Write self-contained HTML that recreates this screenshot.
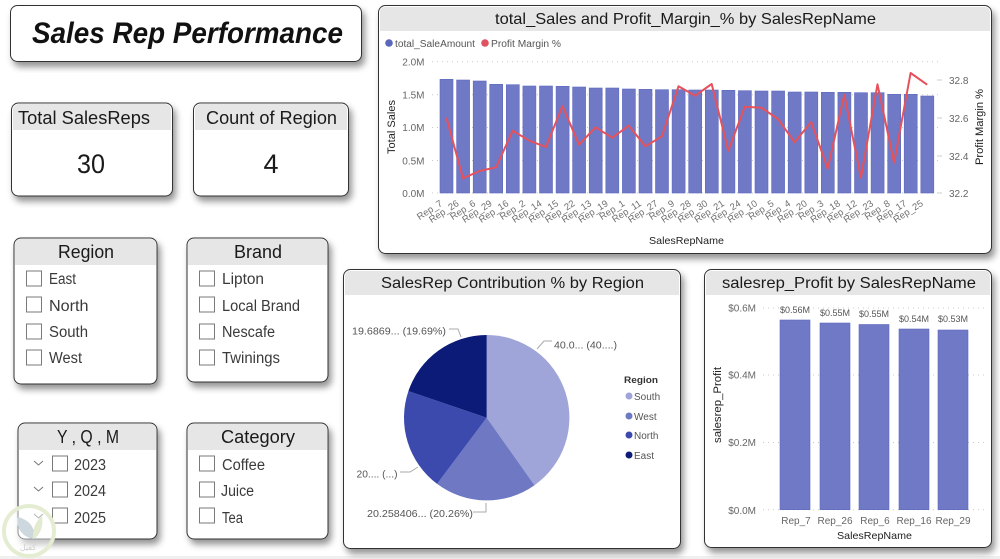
<!DOCTYPE html>
<html><head><meta charset="utf-8"><style>
html,body{margin:0;padding:0;background:#fff;width:1000px;height:559px;overflow:hidden}
svg{display:block}
text{font-family:"Liberation Sans",sans-serif}
.t{fill:#1a1a1a}
.s{fill:#3a3a3a;font-size:15.5px}
.a{fill:#666;font-size:10px}
.r{fill:#707070;font-size:9.5px;text-anchor:end}
.c{fill:#fff;stroke:#333;stroke-width:1;filter:url(#sh)}
.h{fill:#e6e6e6}
.b{fill:none;stroke:#7a7a7a;stroke-width:1}
.g{stroke:#c8c8c8;stroke-width:1;stroke-dasharray:1 4}
.bar rect{fill:#6f79c5;stroke:#5f6abf;stroke-width:.6}
</style></head><body>
<svg width="1000" height="559" viewBox="0 0 1000 559" xmlns="http://www.w3.org/2000/svg">
<defs><filter id="sh" x="-10%" y="-10%" width="125%" height="130%"><feDropShadow dx="3" dy="5" stdDeviation="3.5" flood-color="#000" flood-opacity=".42"/></filter></defs>
<rect x="0" y="556" width="1000" height="3" fill="#f0f0f0"/>

<!-- title -->
<rect class="c" x="10.5" y="5.5" width="351" height="56" rx="7"/>
<text x="32" y="43" font-size="30" font-weight="bold" font-style="italic" fill="#111" textLength="311" lengthAdjust="spacingAndGlyphs">Sales Rep Performance</text>

<!-- KPI cards -->
<rect class="c" x="11.5" y="103" width="161" height="93" rx="7"/>
<path class="h" d="M13 130V110a6 6 0 0 1 6-6H165a6 6 0 0 1 6 6V130Z"/>
<text class="t" x="18" y="124" font-size="18.5" textLength="132" lengthAdjust="spacingAndGlyphs">Total SalesReps</text>
<text class="t" x="91" y="173" font-size="27" text-anchor="middle" textLength="28" lengthAdjust="spacingAndGlyphs">30</text>
<rect class="c" x="193.5" y="103" width="155" height="93" rx="7"/>
<path class="h" d="M195 130V110a6 6 0 0 1 6-6H341a6 6 0 0 1 6 6V130Z"/>
<text class="t" x="206" y="124" font-size="18.5" textLength="131" lengthAdjust="spacingAndGlyphs">Count of Region</text>
<text class="t" x="271" y="173" font-size="27" text-anchor="middle">4</text>

<!-- slicers -->
<rect class="c" x="14" y="238" width="143" height="146" rx="7"/>
<path class="h" d="M15 265V245a6 6 0 0 1 6-6H150a6 6 0 0 1 6 6V265Z"/>
<text class="t" x="58" y="258" font-size="18.5" textLength="56" lengthAdjust="spacingAndGlyphs">Region</text>
<rect class="b" x="26.5" y="271" width="15" height="15"/><text class="s" x="49" y="284" textLength="27" lengthAdjust="spacingAndGlyphs">East</text>
<rect class="b" x="26.5" y="297" width="15" height="15"/><text class="s" x="49" y="311" textLength="39.5" lengthAdjust="spacingAndGlyphs">North</text>
<rect class="b" x="26.5" y="324" width="15" height="15"/><text class="s" x="49" y="337" textLength="39" lengthAdjust="spacingAndGlyphs">South</text>
<rect class="b" x="26.5" y="350" width="15" height="15"/><text class="s" x="49" y="363" textLength="33" lengthAdjust="spacingAndGlyphs">West</text>

<rect class="c" x="187" y="238" width="141" height="144" rx="7"/>
<path class="h" d="M188 265V245a6 6 0 0 1 6-6H321a6 6 0 0 1 6 6V265Z"/>
<text class="t" x="234" y="258" font-size="18.5" textLength="48" lengthAdjust="spacingAndGlyphs">Brand</text>
<rect class="b" x="199.5" y="271" width="15" height="15"/><text class="s" x="222" y="284" textLength="42" lengthAdjust="spacingAndGlyphs">Lipton</text>
<rect class="b" x="199.5" y="297" width="15" height="15"/><text class="s" x="222" y="311" textLength="78" lengthAdjust="spacingAndGlyphs">Local Brand</text>
<rect class="b" x="199.5" y="324" width="15" height="15"/><text class="s" x="222" y="337" textLength="53" lengthAdjust="spacingAndGlyphs">Nescafe</text>
<rect class="b" x="199.5" y="350" width="15" height="15"/><text class="s" x="222" y="363" textLength="58" lengthAdjust="spacingAndGlyphs">Twinings</text>

<rect class="c" x="18" y="423" width="139" height="116" rx="7"/>
<path class="h" d="M19 450V430a6 6 0 0 1 6-6H150a6 6 0 0 1 6 6V450Z"/>
<text class="t" x="57" y="443" font-size="18.5" textLength="62" lengthAdjust="spacingAndGlyphs">Y , Q , M</text>
<path d="M34 461l4.500 4 4.500-4M34 487l4.500 4 4.500-4M34 514l4.500 4 4.500-4" fill="none" stroke="#777" stroke-width="1"/>
<rect class="b" x="52.500" y="456" width="15" height="15"/><text class="s" x="74" y="470" textLength="32" lengthAdjust="spacingAndGlyphs">2023</text>
<rect class="b" x="52.500" y="482" width="15" height="15"/><text class="s" x="74" y="496" textLength="32" lengthAdjust="spacingAndGlyphs">2024</text>
<rect class="b" x="52.500" y="508" width="15" height="15"/><text class="s" x="74" y="523" textLength="32" lengthAdjust="spacingAndGlyphs">2025</text>

<rect class="c" x="187" y="423" width="141" height="116" rx="7"/>
<path class="h" d="M188 450V430a6 6 0 0 1 6-6H321a6 6 0 0 1 6 6V450Z"/>
<text class="t" x="221" y="443" font-size="18.5" textLength="74" lengthAdjust="spacingAndGlyphs">Category</text>
<rect class="b" x="199.500" y="456" width="15" height="15"/><text class="s" x="222" y="470" textLength="43" lengthAdjust="spacingAndGlyphs">Coffee</text>
<rect class="b" x="199.500" y="482" width="15" height="15"/><text class="s" x="221" y="496" textLength="33" lengthAdjust="spacingAndGlyphs">Juice</text>
<rect class="b" x="199.500" y="508" width="15" height="15"/><text class="s" x="222" y="523" textLength="21" lengthAdjust="spacingAndGlyphs">Tea</text>

<!-- main chart -->
<rect class="c" x="378.500" y="5.500" width="613" height="248" rx="7"/>
<path class="h" d="M380 31V12a5 5 0 0 1 5-5H985a5 5 0 0 1 5 5V31Z"/>
<text class="t" x="495" y="24" font-size="16" textLength="381" lengthAdjust="spacingAndGlyphs">total_Sales and Profit_Margin_% by SalesRepName</text>
<circle cx="389" cy="43" r="3.800" fill="#5b66bd"/><text x="395" y="47" font-size="10" fill="#555" textLength="80" lengthAdjust="spacingAndGlyphs">total_SaleAmount</text>
<circle cx="485" cy="43" r="3.800" fill="#e0525f"/><text x="491" y="47" font-size="10" fill="#555" textLength="70" lengthAdjust="spacingAndGlyphs">Profit Margin %</text>
<g>
<line class="g" x1="432" x2="940" y1="61.700" y2="61.700"/><line class="g" x1="432" x2="940" y1="94.700" y2="94.700"/><line class="g" x1="432" x2="940" y1="127.500" y2="127.500"/><line class="g" x1="432" x2="940" y1="160.500" y2="160.500"/><line class="g" x1="432" x2="940" y1="193" y2="193"/>
</g>
<text class="a" x="424.500" y="65.500" text-anchor="end">2.0M</text><text class="a" x="424.500" y="98.500" text-anchor="end">1.5M</text><text class="a" x="424.500" y="131" text-anchor="end">1.0M</text><text class="a" x="424.500" y="164.500" text-anchor="end">0.5M</text><text class="a" x="424.500" y="197" text-anchor="end">0.0M</text>
<g class="bar">
<rect x="440" y="79.300" width="13" height="113.700"/><rect x="456.600" y="80" width="13" height="113"/><rect x="473.200" y="81" width="13" height="112"/><rect x="489.700" y="84.300" width="13" height="108.700"/><rect x="506.300" y="84.700" width="13" height="108.300"/><rect x="522.900" y="86" width="13" height="107"/><rect x="539.500" y="86" width="13" height="107"/><rect x="556.100" y="86.300" width="13" height="106.700"/><rect x="572.600" y="87" width="13" height="106"/><rect x="589.200" y="88" width="13" height="105"/><rect x="605.800" y="88" width="13" height="105"/><rect x="622.400" y="89" width="13" height="104"/><rect x="639" y="89.300" width="13" height="103.700"/><rect x="655.500" y="89.700" width="13" height="103.300"/><rect x="672.100" y="89.700" width="13" height="103.300"/><rect x="688.700" y="90" width="13" height="103"/><rect x="705.300" y="90" width="13" height="103"/><rect x="721.900" y="90.300" width="13" height="102.700"/><rect x="738.400" y="90.700" width="13" height="102.300"/><rect x="755" y="91" width="13" height="102"/><rect x="771.600" y="91" width="13" height="102"/><rect x="788.200" y="92" width="13" height="101"/><rect x="804.800" y="92" width="13" height="101"/><rect x="821.300" y="92.300" width="13" height="100.700"/><rect x="837.900" y="92.300" width="13" height="100.700"/><rect x="854.500" y="92.700" width="13" height="100.300"/><rect x="871.100" y="92.700" width="13" height="100.300"/><rect x="887.700" y="94.300" width="13" height="98.700"/><rect x="904.200" y="94.300" width="13" height="98.700"/><rect x="920.800" y="96" width="13" height="97"/>
</g>
<polyline fill="none" stroke="#e5525c" stroke-width="2" stroke-linejoin="round" points="446.400,117.700 463,178.300 479.600,171 496.100,167.300 512.700,130.700 529.300,140.700 545.900,147 562.500,106 579,144.700 595.600,127.300 612.200,137.700 628.800,125.700 645.400,146.300 661.900,136.300 678.500,86.300 695.100,95.700 711.700,84 728.300,150.700 744.800,106.700 761.400,107.700 778,119 794.600,142.300 811.200,122 827.700,168.700 844.300,94.700 860.900,177.700 877.500,84.300 894.100,162.700 910.600,73 927.200,84.700"/>
<text class="a" x="949" y="84">32.8</text><text class="a" x="949" y="122">32.6</text><text class="a" x="949" y="160">32.4</text><text class="a" x="949" y="197">32.2</text>
<path d="M937 80h5M937 118h5M937 156h5M937 193h5" stroke="#ccc"/>
<text class="r" transform="rotate(-33 443 205)" x="443" y="205">Rep_7</text><text class="r" transform="rotate(-33 459.600 205)" x="459.600" y="205">Rep_26</text><text class="r" transform="rotate(-33 476.200 205)" x="476.200" y="205">Rep_6</text><text class="r" transform="rotate(-33 492.700 205)" x="492.700" y="205">Rep_29</text><text class="r" transform="rotate(-33 509.300 205)" x="509.300" y="205">Rep_16</text><text class="r" transform="rotate(-33 525.900 205)" x="525.900" y="205">Rep_2</text><text class="r" transform="rotate(-33 542.500 205)" x="542.500" y="205">Rep_14</text><text class="r" transform="rotate(-33 559.100 205)" x="559.100" y="205">Rep_15</text><text class="r" transform="rotate(-33 575.600 205)" x="575.600" y="205">Rep_22</text><text class="r" transform="rotate(-33 592.200 205)" x="592.200" y="205">Rep_13</text><text class="r" transform="rotate(-33 608.800 205)" x="608.800" y="205">Rep_19</text><text class="r" transform="rotate(-33 625.400 205)" x="625.400" y="205">Rep_1</text><text class="r" transform="rotate(-33 642 205)" x="642" y="205">Rep_11</text><text class="r" transform="rotate(-33 658.500 205)" x="658.500" y="205">Rep_27</text><text class="r" transform="rotate(-33 675.100 205)" x="675.100" y="205">Rep_9</text><text class="r" transform="rotate(-33 691.700 205)" x="691.700" y="205">Rep_28</text><text class="r" transform="rotate(-33 708.300 205)" x="708.300" y="205">Rep_30</text><text class="r" transform="rotate(-33 724.900 205)" x="724.900" y="205">Rep_21</text><text class="r" transform="rotate(-33 741.400 205)" x="741.400" y="205">Rep_24</text><text class="r" transform="rotate(-33 758 205)" x="758" y="205">Rep_10</text><text class="r" transform="rotate(-33 774.600 205)" x="774.600" y="205">Rep_5</text><text class="r" transform="rotate(-33 791.200 205)" x="791.200" y="205">Rep_4</text><text class="r" transform="rotate(-33 807.800 205)" x="807.800" y="205">Rep_20</text><text class="r" transform="rotate(-33 824.300 205)" x="824.300" y="205">Rep_3</text><text class="r" transform="rotate(-33 840.900 205)" x="840.900" y="205">Rep_18</text><text class="r" transform="rotate(-33 857.500 205)" x="857.500" y="205">Rep_12</text><text class="r" transform="rotate(-33 874.100 205)" x="874.100" y="205">Rep_23</text><text class="r" transform="rotate(-33 890.700 205)" x="890.700" y="205">Rep_8</text><text class="r" transform="rotate(-33 907.200 205)" x="907.200" y="205">Rep_17</text><text class="r" transform="rotate(-33 923.800 205)" x="923.800" y="205">Rep_25</text>
<text x="649" y="244" font-size="10.500" fill="#222" textLength="75" lengthAdjust="spacingAndGlyphs">SalesRepName</text>
<text transform="rotate(-90 395 127)" x="395" y="127" font-size="11" fill="#222" text-anchor="middle" textLength="54" lengthAdjust="spacingAndGlyphs">Total Sales</text>
<text transform="rotate(-90 983 127)" x="983" y="127" font-size="11" fill="#222" text-anchor="middle" textLength="76" lengthAdjust="spacingAndGlyphs">Profit Margin %</text>

<!-- pie -->
<rect class="c" x="343.500" y="269.500" width="337" height="279" rx="7"/>
<path class="h" d="M345 295V276a5 5 0 0 1 5-5H674a5 5 0 0 1 5 5V295Z"/>
<text class="t" x="381" y="288" font-size="16" textLength="263" lengthAdjust="spacingAndGlyphs">SalesRep Contribution % by Region</text>
<path d="M486.700 417.700V335A82.700 82.700 0 0 1 534.500 485.200Z" fill="#9fa5d8"/>
<path d="M486.700 417.700L534.500 485.200A82.700 82.700 0 0 1 437.100 483.900Z" fill="#6e78c3"/>
<path d="M486.700 417.700L437.100 483.900A82.700 82.700 0 0 1 408.400 391.100Z" fill="#3c4aae"/>
<path d="M486.700 417.700L408.400 391.100A82.700 82.700 0 0 1 486.700 335Z" fill="#0c1a78"/>
<path d="M449 329h9l3 8M537 349l7-8h8M400 472h10l8-5M473 512h13v-9" fill="none" stroke="#aaa" stroke-width="1"/>
<text x="352" y="334.500" font-size="10.500" fill="#555" textLength="94" lengthAdjust="spacingAndGlyphs">19.6869... (19.69%)</text>
<text x="554" y="348.500" font-size="10.500" fill="#555" textLength="63" lengthAdjust="spacingAndGlyphs">40.0... (40....)</text>
<text x="356.500" y="477.500" font-size="10.500" fill="#555" textLength="41" lengthAdjust="spacingAndGlyphs">20.... (...)</text>
<text x="367" y="517" font-size="10.500" fill="#555" textLength="106" lengthAdjust="spacingAndGlyphs">20.258406... (20.26%)</text>
<text x="624" y="383" font-size="9.500" font-weight="bold" fill="#333" textLength="34" lengthAdjust="spacingAndGlyphs">Region</text>
<circle cx="629" cy="396" r="3.500" fill="#9fa5d8"/><text x="634" y="400" font-size="10" fill="#555">South</text>
<circle cx="629" cy="416" r="3.500" fill="#6e78c3"/><text x="634" y="420" font-size="10" fill="#555">West</text>
<circle cx="629" cy="435" r="3.500" fill="#3c4aae"/><text x="634" y="439" font-size="10" fill="#555">North</text>
<circle cx="629" cy="455" r="3.500" fill="#0c1a78"/><text x="634" y="459" font-size="10" fill="#555">East</text>

<!-- profit -->
<rect class="c" x="704.500" y="269.500" width="287" height="278" rx="7"/>
<path class="h" d="M706 295V276a5 5 0 0 1 5-5H985a5 5 0 0 1 5 5V295Z"/>
<text class="t" x="722" y="288" font-size="16" textLength="254" lengthAdjust="spacingAndGlyphs">salesrep_Profit by SalesRepName</text>
<line class="g" x1="763" x2="984" y1="308" y2="308"/><line class="g" x1="763" x2="984" y1="375" y2="375"/><line class="g" x1="763" x2="984" y1="442.500" y2="442.500"/><line class="g" x1="763" x2="984" y1="509.700" y2="509.700"/>
<text class="a" x="756" y="311.500" text-anchor="end">$0.6M</text><text class="a" x="756" y="378.500" text-anchor="end">$0.4M</text><text class="a" x="756" y="446" text-anchor="end">$0.2M</text><text class="a" x="756" y="514" text-anchor="end">$0.0M</text>
<g class="bar"><rect x="780" y="320" width="30" height="189.700"/><rect x="820" y="323" width="30" height="186.700"/><rect x="859" y="324.500" width="30" height="185.200"/><rect x="899" y="329" width="30" height="180.700"/><rect x="938" y="330" width="30" height="179.700"/></g>
<g font-size="9" fill="#555" text-anchor="middle"><text x="795" y="313">$0.56M</text><text x="835" y="316">$0.55M</text><text x="874" y="317">$0.55M</text><text x="914" y="322">$0.54M</text><text x="953" y="322">$0.53M</text></g>
<g class="a" text-anchor="middle"><text x="796" y="524">Rep_7</text><text x="835" y="524">Rep_26</text><text x="875" y="524">Rep_6</text><text x="914" y="524">Rep_16</text><text x="953" y="524">Rep_29</text></g>
<text x="837" y="539" font-size="10.500" fill="#222" textLength="75" lengthAdjust="spacingAndGlyphs">SalesRepName</text>
<text transform="rotate(-90 721 405)" x="721" y="405" font-size="11" fill="#222" text-anchor="middle" textLength="76" lengthAdjust="spacingAndGlyphs">salesrep_Profit</text>

<!-- watermark -->
<circle cx="29" cy="531" r="25" fill="#fff" fill-opacity=".45" stroke="#e4ecd2" stroke-width="4"/>
<path d="M18 517C15 528 23 537 33 539C37 530 30 520 18 517Z" fill="#ccd7de"/>
<path d="M33 539C39 537 44 527 42 516C37 520 32 528 33 539Z" fill="#e2ead0"/>
<text x="28" y="550" font-size="8" fill="#cfcfcf" text-anchor="middle">كفيل</text>
</svg>
</body></html>
